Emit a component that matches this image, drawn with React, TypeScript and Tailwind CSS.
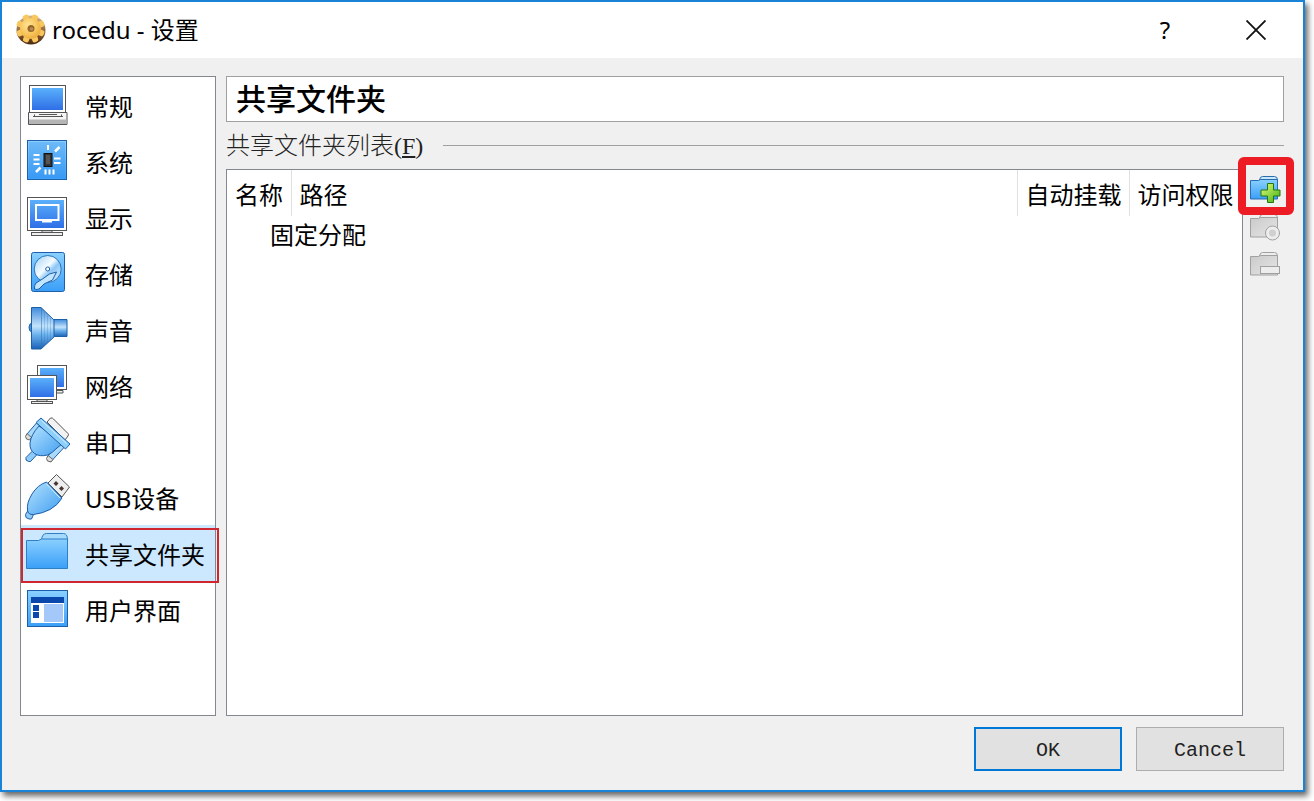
import { useState } from "react";
import type { ReactNode } from "react";
import clsx from "clsx";

const STROKE = "#1d5fa8";
const GEAR_TEETH = [22, 67, 112, 157];

function Gradients() {
  return (
    <svg width="0" height="0" className="absolute" aria-hidden="true">
      <defs>
        <linearGradient id="screen" x1="0" y1="0" x2="0" y2="1">
          <stop offset="0" stopColor="#5ab0fb" />
          <stop offset="1" stopColor="#2f6fe6" />
        </linearGradient>
        <linearGradient id="sky" x1="0" y1="0" x2="0" y2="1">
          <stop offset="0" stopColor="#8ad0ff" />
          <stop offset="1" stopColor="#3a9ff8" />
        </linearGradient>
        <linearGradient id="cone" x1="0" y1="0" x2="0" y2="1">
          <stop offset="0" stopColor="#3f8cdc" />
          <stop offset="0.45" stopColor="#c4e3fb" />
          <stop offset="0.65" stopColor="#6db3ee" />
          <stop offset="1" stopColor="#1b62b8" />
        </linearGradient>
        <linearGradient id="plug" x1="0" y1="0" x2="1" y2="1">
          <stop offset="0" stopColor="#b5e3ff" />
          <stop offset="1" stopColor="#3f9df0" />
        </linearGradient>
        <linearGradient id="disc" x1="0" y1="0" x2="1" y2="1">
          <stop offset="0" stopColor="#9fd2fa" />
          <stop offset="0.45" stopColor="#f4fbff" />
          <stop offset="0.6" stopColor="#8cc6f6" />
          <stop offset="1" stopColor="#e6f5ff" />
        </linearGradient>
        <linearGradient id="grey" x1="0" y1="0" x2="1" y2="1">
          <stop offset="0" stopColor="#cacaca" />
          <stop offset="1" stopColor="#e6e6e6" />
        </linearGradient>
        <linearGradient id="plus" x1="0" y1="0" x2="1" y2="1">
          <stop offset="0" stopColor="#e4ff7a" />
          <stop offset="1" stopColor="#3fae12" />
        </linearGradient>
        <linearGradient id="rim" x1="0" y1="0" x2="0" y2="1">
          <stop offset="0" stopColor="#d8b98c" />
          <stop offset="0.6" stopColor="#8a5a30" />
          <stop offset="1" stopColor="#4a2a10" />
        </linearGradient>
        <radialGradient id="gold" cx="0.4" cy="0.35" r="0.7">
          <stop offset="0" stopColor="#ffe597" />
          <stop offset="0.6" stopColor="#f8c55a" />
          <stop offset="1" stopColor="#eaa93a" />
        </radialGradient>
      </defs>
    </svg>
  );
}

function GearIcon() {
  return (
    <svg width="34" height="34" viewBox="0 0 34 34" aria-hidden="true">
      <circle cx="17" cy="17" r="14.500" fill="url(#rim)" />
      {GEAR_TEETH.map((angle) => (
        <rect
          key={angle}
          x="13.500"
          y="1"
          width="6"
          height="29"
          rx="2"
          fill="#f8c85e"
          transform={`rotate(${angle} 16.5 15.5)`}
        />
      ))}
      <circle cx="16.500" cy="15.500" r="10.500" fill="url(#gold)" />
      <circle cx="17" cy="15.500" r="3.500" fill="#96652a" />
      <circle cx="17.500" cy="16" r="1.800" fill="#b58c58" />
    </svg>
  );
}

function Icon({ children }: { children: ReactNode }) {
  return (
    <svg width="44" height="44" viewBox="0 0 44 44" className="shrink-0 overflow-visible" aria-hidden="true">
      {children}
    </svg>
  );
}

const generalIcon = (
  <Icon>
    <rect x="4.500" y="2.500" width="36" height="28" fill="#fff" stroke="#555" />
    <rect x="7" y="5" width="31" height="22" fill="url(#screen)" />
    <path d="M3.500 29.500h38.500v12h-38.500z" fill="#f5f5f5" stroke="#555" />
    <path d="M4 36.500h37.500v4.500h-37.500z" fill="#b5b5b5" />
    <path d="M8 33.500h30M9.500 31.500v2M14 31.500h18M36.500 31.500v2" stroke="#555" fill="none" />
  </Icon>
);

const systemIcon = (
  <Icon>
    <rect x="2.500" y="1.500" width="39" height="39" fill="url(#sky)" stroke={STROKE} />
    <rect x="4" y="3" width="36" height="36" fill="#2e8bea" opacity="0.3" />
    <rect x="19" y="14.500" width="8" height="13" fill="#333" stroke="#111" />
    <rect x="21" y="16" width="4" height="9" fill="#555" />
    <g stroke="#fff" strokeWidth="2">
      <path d="M8.500 16h6M8.500 20.500h6M8.500 25h6M29 19.500h6.500M29 24h6.500" />
      <path d="M23 6v5M20.500 30.500v5M24.500 30.500v5M28.500 30.500v5" />
      <path d="M30 12.500l4.500-4.500M11 33l4.500-4.500" strokeWidth="2.500" />
    </g>
  </Icon>
);

const displayIcon = (
  <Icon>
    <path d="M17 35h10v3h-10z" fill="#ccc" stroke="#555" />
    <rect x="2.500" y="2.500" width="39" height="33" fill="#fff" stroke="#555" />
    <rect x="5" y="5" width="34" height="28" fill="url(#screen)" />
    <rect x="11" y="10" width="22.500" height="15" fill="none" stroke="#fff" strokeWidth="2" />
    <path d="M17 25.500h10v2h-10z" fill="#fff" />
    <rect x="6.500" y="37.500" width="31" height="3" fill="#eee" stroke="#555" />
  </Icon>
);

const storageIcon = (
  <Icon>
    <rect x="6.500" y="1.500" width="33" height="39" rx="2" fill="url(#sky)" stroke={STROKE} />
    <circle cx="22.700" cy="18" r="13.500" fill="url(#disc)" stroke="#2a72b8" />
    <circle cx="22.700" cy="18" r="2" fill="#fff" stroke={STROKE} />
    <path d="M31.500 21l-4 8-8.500 4-5 5q-2 1-4.500 0-.500-3.500 1.500-6l6.500-4 7-5z" fill="#c4e5ff" stroke={STROKE} />
  </Icon>
);

const audioIcon = (
  <Icon>
    <path d="M7 16q-3 .500-3 4.500t3 4.500z" fill="#4a96dc" stroke={STROKE} />
    <path d="M28.500 12.500h13.500v17h-13.500z" fill="url(#cone)" stroke={STROKE} />
    <path d="M6.500 .500h9.500l13 12.500v17l-13 12h-9.500z" fill="url(#cone)" stroke={STROKE} />
    <path d="M16.500 1v40" stroke="#2a72b8" opacity="0.5" />
    <path d="M19.500 5v34M22.500 8v28M25.500 11v22" stroke="#2a72b8" opacity="0.25" />
  </Icon>
);

const networkIcon = (
  <Icon>
    <path d="M31 27.500h7v2.500h-7z" fill="#eee" stroke="#555" />
    <rect x="12.500" y="2.500" width="29" height="24" fill="#fff" stroke="#555" />
    <rect x="15" y="5" width="24" height="19" fill="url(#screen)" />
    <path d="M12 36h10v3h-10z" fill="#ccc" stroke="#555" />
    <rect x="2.500" y="12.500" width="29" height="24" fill="#fff" stroke="#555" />
    <rect x="5" y="15" width="24" height="19" fill="url(#screen)" />
    <rect x="6.500" y="38.500" width="21" height="2" fill="#eee" stroke="#555" />
  </Icon>
);

const serialIcon = (
  <Icon>
    <path d="M22 3l3.500-4q2-.500 3 1l14.500 14.500q1 1 0 2.500l-3 4z" fill="#f2f2f2" stroke="#555" />
    <path d="M8.500 31l-7.500 7.500 0 2.500 2.500 1.500 2 0 7.500-8z" fill="#8fcbfa" stroke={STROKE} />
    <path d="M11.500 4l-9.500 11v3.500l3.500 1.500 11-11.500z" fill="#a9dafc" stroke={STROKE} />
    <path d="M2 14.500l4.500 4-2 2.500-3-1-1-2.500z" fill="#ddd" stroke="#666" />
    <path d="M33.500 24l-11 13.500v3l3.500 2 13-14z" fill="#a9dafc" stroke={STROKE} />
    <path d="M23 36.500l5 4-2 2.500-3.500-1-1-2.500z" fill="#ddd" stroke="#666" />
    <path d="M14 7q-8 8.500-9 17-.500 7 4.500 10.500t13 1.500q5-2 9.500-7l6-5z" fill="url(#plug)" stroke={STROKE} />
    <path d="M11 3.500l5-4.500 29 26-4.500 5z" fill="#8fd0fb" stroke={STROKE} />
    <path d="M16.500 1.500l25 23" stroke="#d5efff" />
  </Icon>
);

const usbIcon = (
  <Icon>
    <path d="M31.500-.500l13 12.500-7.500 10-14-14z" fill="#eee" stroke="#555" />
    <path d="M31 6l2.500 2.500-2.500 2.500-2.500-2.500zM36.500 11l2.500 2.500-2.500 2.500-2.500-2.500z" fill="#4a3535" />
    <path d="M3 35.500l-2.500 4 .500 3 3 1.500h2.500l2.500-5.500z" fill="#8fcbfa" stroke={STROKE} />
    <path d="M21.500 7q-9 3-14.500 12t-4.500 16q.500 5 6 4.500 9-1 16.500-5t12-11.500z" fill="url(#plug)" stroke={STROKE} />
    <path d="M21.500 9l13.500 14" stroke="#d5efff" />
  </Icon>
);

const folderIcon = (
  <Icon>
    <path d="M16.500 9q.500-6.500 5-6.500h17q4 0 4 6.500z" fill="#a5dafd" stroke="#2f7fc4" />
    <path d="M1.500 9.500h12l3-1.500h26v29.500h-41z" fill="url(#sky)" stroke="#2f7fc4" />
  </Icon>
);

const interfaceIcon = (
  <Icon>
    <rect x="2.500" y="3.500" width="40" height="36" fill="url(#sky)" stroke={STROKE} />
    <rect x="6" y="10" width="33" height="6" fill="#0a48ac" />
    <rect x="6" y="16" width="33" height="20" fill="#fff" />
    <rect x="19" y="17" width="19" height="18" fill="#a5c8fa" />
    <path d="M8 18h6v6h-6zM8 25h6v6h-6z" fill="#0a48ac" />
  </Icon>
);

const CATEGORIES = [
  { label: "常规", icon: generalIcon },
  { label: "系统", icon: systemIcon },
  { label: "显示", icon: displayIcon },
  { label: "存储", icon: storageIcon },
  { label: "声音", icon: audioIcon },
  { label: "网络", icon: networkIcon },
  { label: "串口", icon: serialIcon },
  { label: "USB设备", icon: usbIcon },
  { label: "共享文件夹", icon: folderIcon, marked: true },
  { label: "用户界面", icon: interfaceIcon },
];

function ToolFolder({ disabled, children }: { disabled?: boolean; children: ReactNode }) {
  const stroke = disabled ? "#a0a0a0" : "#2a6cac";
  return (
    <svg width="32" height="32" viewBox="0 0 32 32" className="block" aria-hidden="true">
      <path d="M9.500 6q.500-3.500 3-3.500h12q3 0 3 3.500z" fill={disabled ? "#eee" : "#c5e8fd"} stroke={stroke} />
      <path d="M.500 6.500h8l2-1h17v19.500h-27z" fill={disabled ? "url(#grey)" : "url(#sky)"} stroke={stroke} />
      {children}
    </svg>
  );
}

export default function App() {
  const [selected, setSelected] = useState("共享文件夹");

  return (
    <div className="h-screen overflow-hidden bg-white pr-[9px] pb-[9px] font-['Noto_Sans','Noto_Sans_CJK_SC',sans-serif] text-2xl text-black">
      <Gradients />
      <div className="flex h-full flex-col border-2 border-[#1883d7] bg-[#f0f0f0] shadow-[3px_4px_6px_rgba(0,0,0,0.6)]">
        {/* Title bar */}
        <header className="flex h-14 shrink-0 items-center bg-white pr-[23px] pl-3">
          <GearIcon />
          <h1 className="ml-1 flex-1">rocedu - 设置</h1>
          <button aria-label="帮助" className="w-12">?</button>
          <button aria-label="关闭" className="ml-[43px] flex w-12 justify-center">
            <svg width="20" height="20" viewBox="0 0 20 20" aria-hidden="true">
              <path d="M.500 .500l19 19M19.500 .500l-19 19" stroke="#111" strokeWidth="1.800" />
            </svg>
          </button>
        </header>

        <div className="flex min-h-0 flex-1 flex-col pt-[18px] pr-[19px] pb-[19px] pl-[18px]">
          <div className="flex min-h-0 flex-1 gap-[10px]">
            {/* Categories */}
            <nav className="w-[196px] shrink-0 border border-[#828790] bg-white">
              {CATEGORIES.map((item) => (
                <button
                  key={item.label}
                  onClick={() => setSelected(item.label)}
                  className={clsx(
                    "relative flex h-14 w-full items-center gap-4 pl-1 text-left whitespace-nowrap",
                    selected === item.label && "bg-[#cce8ff]"
                  )}
                >
                  {item.icon}
                  <span className="pt-[3px]">{item.label}</span>
                  {item.marked && (
                    <span className="absolute top-[3px] -right-1 -bottom-0.5 left-0 border-2 border-[#d0262f]" />
                  )}
                </button>
              ))}
            </nav>

            {/* Shared folders page */}
            <main className="flex min-w-0 flex-1 flex-col">
              <h2 className="flex h-[46px] shrink-0 items-center border border-[#a0a0a0] bg-white pl-[9px] text-[30px] font-medium">
                共享文件夹
              </h2>
              <div className="flex h-[47px] shrink-0 items-center gap-5">
                <h3 className="font-light text-[#222]">
                  共享文件夹列表
                  <span className="font-['Liberation_Serif',serif]">
                    (<u>F</u>)
                  </span>
                </h3>
                <div className="h-px flex-1 bg-[#a0a0a0]" />
              </div>

              <div className="flex min-h-0 flex-1">
                <div className="min-w-0 flex-1 border border-[#828790] bg-white">
                  <table className="w-full table-fixed text-left whitespace-nowrap">
                    <thead>
                      <tr className="h-[46px]">
                        <th className="w-16 border-r border-[#e0e0e0] px-0 pt-[3px] pl-2 font-normal">名称</th>
                        <th className="border-r border-[#e0e0e0] px-0 pt-[3px] pl-2 font-normal">路径</th>
                        <th className="w-28 border-r border-[#e0e0e0] px-0 pt-[3px] pl-2 font-normal">自动挂载</th>
                        <th className="w-[113px] px-0 pt-[3px] pl-2 font-normal">访问权限</th>
                      </tr>
                    </thead>
                    <tbody>
                      <tr className="h-[38px]">
                        <td colSpan={4} className="pl-[43px]">固定分配</td>
                      </tr>
                    </tbody>
                  </table>
                </div>

                <div className="flex w-[41px] shrink-0 flex-col items-start gap-1.5 pt-[5px] pl-[7px]">
                  <button aria-label="添加共享文件夹" className="relative">
                    <ToolFolder>
                      <path d="M17.500 9.500h6v6.500h6.500v6h-6.500v6.500h-6v-6.500h-6.500v-6h6.500z" fill="url(#plus)" stroke="#25760f" />
                    </ToolFolder>
                    <span className="absolute -top-[17px] -right-3 -bottom-[9px] -left-3 z-10 rounded-md border-8 border-[#ed1c24]" />
                  </button>
                  <button aria-label="编辑共享文件夹" disabled>
                    <ToolFolder disabled>
                      <circle cx="22.500" cy="21" r="7" fill="#ededed" stroke="#a0a0a0" />
                      <circle cx="22.500" cy="21" r="3.500" fill="#d0d0d0" />
                    </ToolFolder>
                  </button>
                  <button aria-label="删除共享文件夹" disabled>
                    <ToolFolder disabled>
                      <rect x="10.500" y="16.500" width="19" height="7" fill="#ededed" stroke="#a0a0a0" />
                    </ToolFolder>
                  </button>
                </div>
              </div>
            </main>
          </div>

          <footer className="mt-[11px] flex shrink-0 justify-end gap-[14px] font-['Liberation_Mono',monospace] text-xl text-[#222]">
            <button className="h-11 w-[148px] border-2 border-[#0078d7] bg-[#e1e1e1] pt-1">OK</button>
            <button className="h-11 w-[148px] border border-[#adadad] bg-[#e1e1e1] pt-1">Cancel</button>
          </footer>
        </div>
      </div>
    </div>
  );
}
